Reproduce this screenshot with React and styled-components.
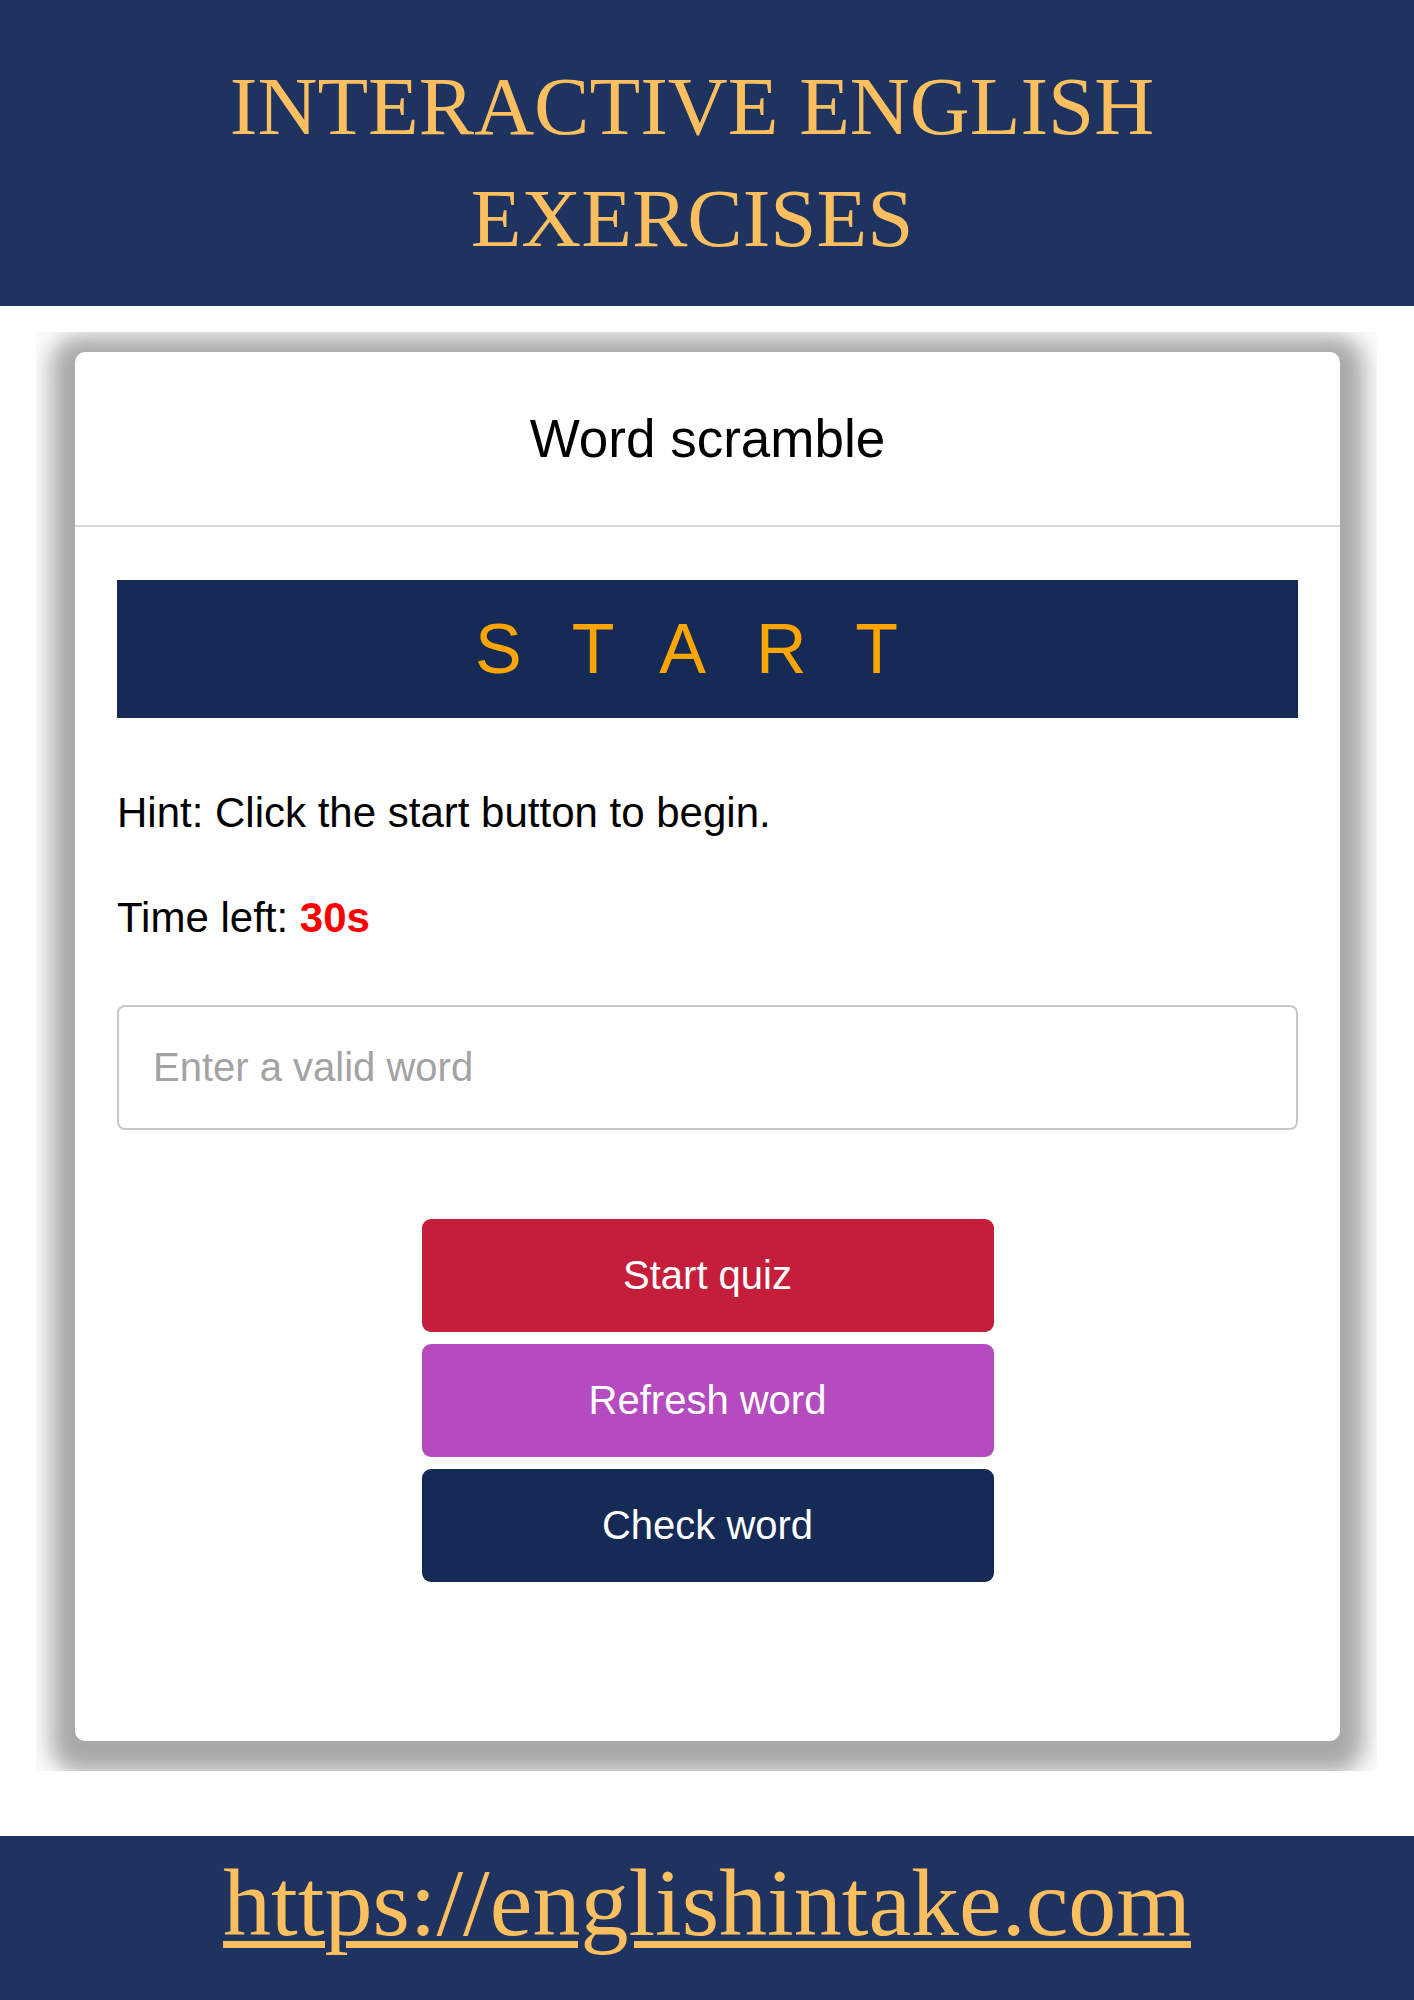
import React from "react";
import styled, { createGlobalStyle } from "styled-components";

const GlobalStyle = createGlobalStyle`
  html, body {
    margin: 0;
    padding: 0;
    background: #ffffff;
  }
  * {
    box-sizing: border-box;
  }
`;

const Header = styled.header`
  background: #1e3360;
  padding: 50px 50px 32px 20px;
`;

const SiteTitle = styled.h1`
  margin: 0 auto;
  max-width: 1000px;
  font-family: "Liberation Serif", "Times New Roman", serif;
  font-weight: 400;
  font-size: 83px;
  line-height: 112px;
  color: #fbbf5f;
  text-align: center;
`;

// light frame that holds the card; it clips the card's heavy shadow
const Stage = styled.section`
  margin: 26px 37px 65px 36px;
  padding: 20px 37px 30px 39px;
  background: #fcfcfc;
  overflow: hidden;
`;

const Card = styled.div`
  background: #ffffff;
  border-radius: 10px;
  box-shadow: 0 8px 22px 24px #a9a9a9;
  font-family: "Liberation Sans", Arial, Helvetica, sans-serif;
`;

const CardHeader = styled.div`
  height: 175px;
  display: flex;
  align-items: center;
  justify-content: center;
  border-bottom: 2px solid #d8d8d8;
`;

const CardTitle = styled.h2`
  margin: 0;
  font-size: 53px;
  font-weight: 400;
  color: #000;
`;

const CardBody = styled.div`
  padding: 53px 42px 159px;
  display: flex;
  flex-direction: column;
`;

const Banner = styled.div`
  height: 138px;
  background: #152a54;
  display: flex;
  align-items: center;
  justify-content: center;
  color: #ffa500;
  font-size: 70px;
  letter-spacing: 50px;
  padding-left: 8px;
`;

const Line = styled.p`
  margin: ${(p) => p.$top}px 0 0;
  font-size: 42px;
  line-height: 50px;
  color: #000;
`;

const Seconds = styled.strong`
  color: #ff0000;
  font-weight: 700;
`;

const WordInput = styled.input`
  margin-top: 62px;
  height: 125px;
  width: 100%;
  border: 2px solid #c8c8c8;
  border-radius: 8px;
  padding: 0 34px;
  font-family: "Liberation Sans", Arial, sans-serif;
  font-size: 40px;
  color: #222;
  outline: none;

  &::placeholder {
    color: #a3a3a3;
  }
`;

const Actions = styled.div`
  margin-top: 89px;
  display: flex;
  flex-direction: column;
  align-items: center;
  gap: 12px;
`;

const ActionButton = styled.button`
  width: 572px;
  height: 113px;
  border: none;
  border-radius: 9px;
  background: ${(p) => p.$bg};
  color: #ffffff;
  font-family: "Liberation Sans", Arial, sans-serif;
  font-size: 40px;
  cursor: pointer;
`;

const Footer = styled.footer`
  background: #1e3360;
  padding: 9px 20px 40px;
  text-align: center;
`;

const SiteLink = styled.a`
  font-family: "Liberation Serif", "Times New Roman", serif;
  font-size: 96px;
  line-height: 1.2;
  color: #fbbf5f;
  text-decoration: underline;
  text-decoration-thickness: 7px;
  text-underline-offset: 6px;
`;

export default function App() {
  return (
    <>
      <GlobalStyle />
      <Header>
        <SiteTitle>INTERACTIVE ENGLISH EXERCISES</SiteTitle>
      </Header>

      <Stage>
        <Card>
          <CardHeader>
            <CardTitle>Word scramble</CardTitle>
          </CardHeader>
          <CardBody>
            <Banner>START</Banner>
            <Line $top={70}>Hint: Click the start button to begin.</Line>
            <Line $top={55}>
              Time left: <Seconds>30s</Seconds>
            </Line>
            <WordInput type="text" placeholder="Enter a valid word" />
            <Actions>
              <ActionButton $bg="#c41e3a">Start quiz</ActionButton>
              <ActionButton $bg="#b44bbe">Refresh word</ActionButton>
              <ActionButton $bg="#152a54">Check word</ActionButton>
            </Actions>
          </CardBody>
        </Card>
      </Stage>

      <Footer>
        <SiteLink href="#">https://englishintake.com</SiteLink>
      </Footer>
    </>
  );
}
